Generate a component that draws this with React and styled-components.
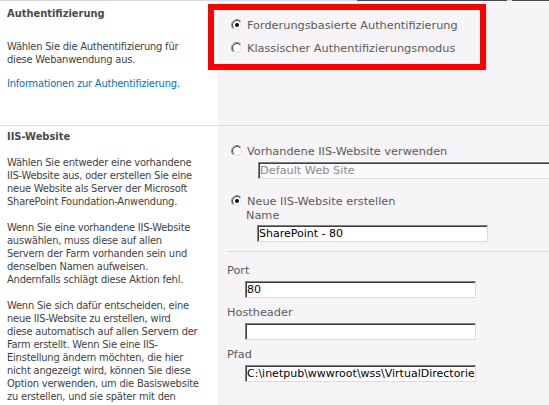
import { useId } from 'react';
import styled, { createGlobalStyle } from 'styled-components';

const GlobalStyle = createGlobalStyle`
  html, body {
    margin: 0;
    padding: 0;
    background: #ffffff;
  }
  * {
    box-sizing: border-box;
  }
`;

const authText = ['Wählen Sie die Authentifizierung für', 'diese Webanwendung aus.'];

const iisParagraphs = [
  [
    'Wählen Sie entweder eine vorhandene',
    'IIS-Website aus, oder erstellen Sie eine',
    'neue Website als Server der Microsoft',
    'SharePoint Foundation-Anwendung.',
  ],
  [
    'Wenn Sie eine vorhandene IIS-Website',
    'auswählen, muss diese auf allen',
    'Servern der Farm vorhanden sein und',
    'denselben Namen aufweisen.',
    'Andernfalls schlägt diese Aktion fehl.',
  ],
  [
    'Wenn Sie sich dafür entscheiden, eine',
    'neue IIS-Website zu erstellen, wird',
    'diese automatisch auf allen Servern der',
    'Farm erstellt. Wenn Sie eine IIS-',
    'Einstellung ändern möchten, die hier',
    'nicht angezeigt wird, können Sie diese',
    'Option verwenden, um die Basiswebsite',
    'zu erstellen, und sie später mit den',
    'Standard-IIS-Tools ändern.',
  ],
];

const Radio = ({ checked }) => {
  const id = useId();
  return (
    <RadioSvg width="12" height="12" viewBox="0 0 12 12">
      <defs>
        <linearGradient id={`${id}o`} x1="0" y1="0" x2="1" y2="1">
          <stop offset="0.45" stopColor="#8a8a8a" />
          <stop offset="0.55" stopColor="#ffffff" />
        </linearGradient>
        <linearGradient id={`${id}i`} x1="0" y1="0" x2="1" y2="1">
          <stop offset="0.45" stopColor="#3c3c3c" />
          <stop offset="0.55" stopColor="#d8d4d0" />
        </linearGradient>
      </defs>
      <circle cx="6" cy="6" r="5.5" fill="none" stroke={`url(#${id}o)`} />
      <circle cx="6" cy="6" r="4.5" fill="#ffffff" stroke={`url(#${id}i)`} />
      {checked && <circle cx="6" cy="6" r="2" fill="#000000" />}
    </RadioSvg>
  );
};

const Paragraph = ({ lines, gap }) => (
  <Description $gap={gap}>
    {lines.map((line) => (
      <Line key={line}>{line}</Line>
    ))}
  </Description>
);

const App = () => {
  return (
    <Page>
      <GlobalStyle />
      <TopEdge>
        <EdgePart />
        <EdgePart $dark $width={150} />
        <EdgePart $width={5} />
        <EdgePart $dark $width={37} />
      </TopEdge>

      <Section>
        <InfoColumn $top={6} $bottom={35}>
          <Heading>Authentifizierung</Heading>
          <Paragraph lines={authText} gap={20} />
          <InfoLink href="#">Informationen zur Authentifizierung.</InfoLink>
        </InfoColumn>
        <FieldColumn>
          <HighlightBox>
            <RadioRow>
              <Radio checked />
              <OptionText>Forderungsbasierte Authentifizierung</OptionText>
            </RadioRow>
            <RadioRow $gap={9}>
              <Radio />
              <OptionText>Klassischer Authentifizierungsmodus</OptionText>
            </RadioRow>
          </HighlightBox>
        </FieldColumn>
      </Section>

      <Section>
        <InfoColumn $top={4} $bottom={20}>
          <Heading>IIS-Website</Heading>
          {iisParagraphs.map((lines) => (
            <Paragraph key={lines[0]} lines={lines} gap={13} />
          ))}
        </InfoColumn>
        <FieldColumn $pad="18px 0 0 0">
          <RadioRow $indent={13}>
            <Radio />
            <OptionText>Vorhandene IIS-Website verwenden</OptionText>
          </RadioRow>
          <TextBox
            $indent={40}
            $width={320}
            $top={4}
            disabled
            defaultValue="Default Web Site"
          />
          <RadioRow $indent={13} $gap={15}>
            <Radio checked />
            <OptionText>Neue IIS-Website erstellen</OptionText>
          </RadioRow>
          <FieldLabel $indent={28} $top={1}>Name</FieldLabel>
          <TextBox $indent={39} $top={2} defaultValue="SharePoint - 80" />
          <Rule />
          <FieldLabel $top={12}>Port</FieldLabel>
          <TextBox defaultValue="80" />
          <FieldLabel>Hostheader</FieldLabel>
          <TextBox defaultValue="" />
          <FieldLabel>Pfad</FieldLabel>
          <TextBox defaultValue="C:\inetpub\wwwroot\wss\VirtualDirectories\80" />
        </FieldColumn>
      </Section>
    </Page>
  );
};

const Page = styled.div`
  width: 549px;
  height: 405px;
  overflow: hidden;
  background: #ffffff;
`;

const TopEdge = styled.div`
  display: flex;
  height: 1px;
`;

const EdgePart = styled.div`
  flex: ${({ $width }) => ($width ? `0 0 ${$width}px` : '1')};
  background: ${({ $dark }) => ($dark ? '#4a4a4a' : '#dadada')};
`;

const Section = styled.div`
  display: grid;
  grid-template-columns: 218px 1fr;
  border-bottom: 1px solid #dcdcdc;
`;

const InfoColumn = styled.div`
  padding: ${({ $top }) => $top}px 8px ${({ $bottom }) => $bottom}px 7px;
  font-family: 'DejaVu Sans Condensed', 'Liberation Sans', sans-serif;
  font-size: 11px;
  line-height: 13px;
  letter-spacing: -0.2px;
  color: #3f3f3f;
`;

const Heading = styled.div`
  font-weight: bold;
  letter-spacing: 0;
  color: #4a4a4a;
`;

const Description = styled.p`
  margin: ${({ $gap }) => $gap}px 0 0 0;
`;

const Line = styled.span`
  display: block;
  white-space: nowrap;
`;

const InfoLink = styled.a`
  display: block;
  margin-top: 11px;
  color: #0072bc;
  text-decoration: none;
  white-space: nowrap;
`;

const FieldColumn = styled.div`
  background: #f7f4f7;
  padding: ${({ $pad }) => $pad || '3px 0 0 0'};
  font-family: 'DejaVu Sans', Verdana, sans-serif;
  font-size: 11.3px;
  color: #5a5a5a;
`;

const HighlightBox = styled.div`
  margin-left: -10px;
  width: 278px;
  height: 66px;
  border: 6px solid #ff0000;
  padding: 8px 0 0 17px;
`;

const RadioRow = styled.div`
  display: flex;
  align-items: center;
  gap: 4px;
  height: 14px;
  margin-top: ${({ $gap }) => $gap || 0}px;
  padding-left: ${({ $indent }) => $indent || 0}px;
`;

const RadioSvg = styled.svg`
  flex: none;
  display: block;
`;

const OptionText = styled.span`
  line-height: 14px;
  white-space: nowrap;
  padding-top: 2px;
`;

const FieldLabel = styled.div`
  line-height: 14px;
  margin-top: ${({ $top }) => ($top === undefined ? 8 : $top)}px;
  padding-left: ${({ $indent }) => $indent || 9}px;
`;

const TextBox = styled.input`
  display: block;
  width: ${({ $width }) => $width || 231}px;
  height: 17px;
  margin: ${({ $top }) => ($top === undefined ? 3 : $top)}px 0 0
    ${({ $indent }) => $indent || 27}px;
  padding: 0 1px;
  border: 1px solid;
  border-color: #808080 #dcdcdc #dcdcdc #808080;
  box-shadow: inset 1px 1px 0 #404040;
  background: #ffffff;
  font-family: 'DejaVu Sans', Verdana, sans-serif;
  font-size: 11px;
  color: #000000;
  outline: none;

  &:disabled {
    background: #fbfafb;
    color: #8a8a8a;
    font-size: 11.3px;
  }
`;

const Rule = styled.div`
  height: 1px;
  margin: 9px 0 0 9px;
  background: #dedade;
`;

export default App;
